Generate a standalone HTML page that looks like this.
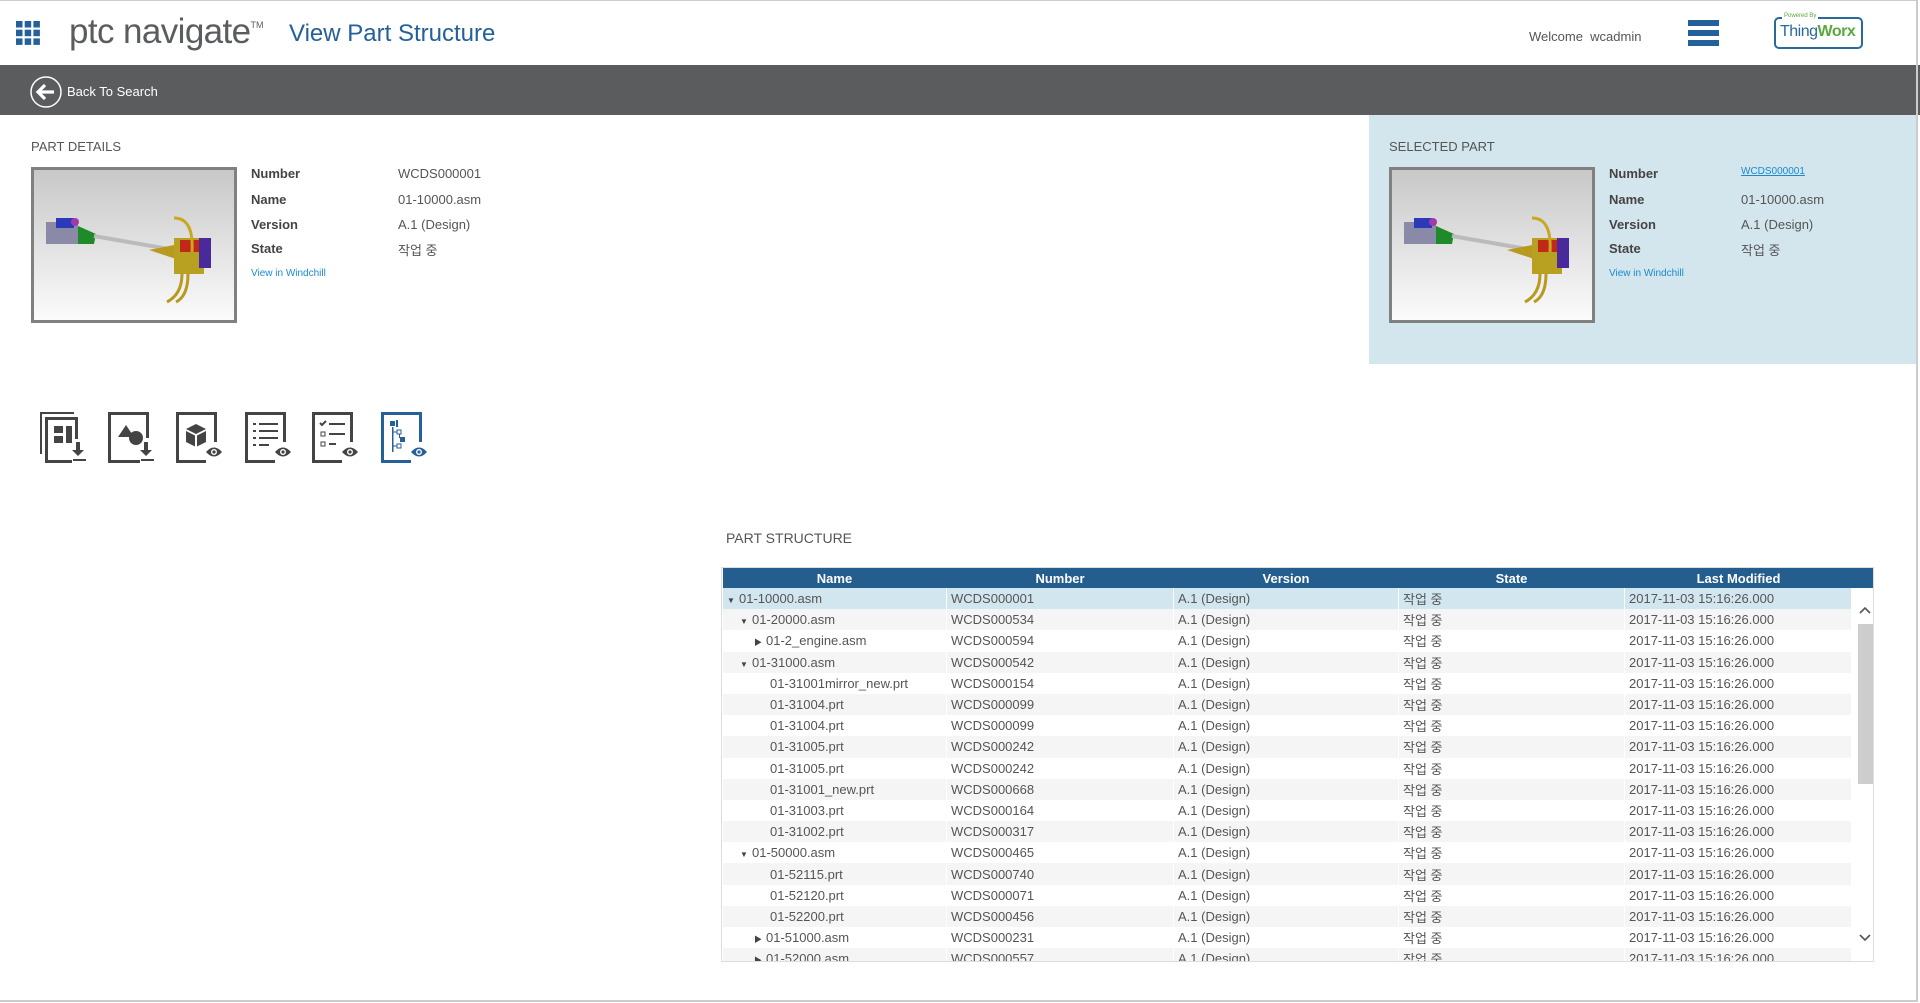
<!DOCTYPE html>
<html><head><meta charset="utf-8">
<style>
*{margin:0;padding:0;box-sizing:border-box}
body{width:1920px;height:1003px;position:relative;overflow:hidden;background:#fff;font-family:"Liberation Sans","Noto Sans CJK KR",sans-serif;color:#555}
.a{position:absolute;white-space:nowrap}
.frame{position:absolute;left:0;top:0;width:1918px;height:1002px;border-top:1px solid #ccc;border-right:2px solid #ccc;border-bottom:2px solid #ccc;pointer-events:none}
.lbl{font-weight:bold;font-size:13px;color:#444}
.val{font-size:13px;color:#555}
.sec{font-size:13px;color:#555}
.img{position:absolute;border:3px solid #808080;background:linear-gradient(#c8c8c8,#fbfbfb)}
table{border-collapse:collapse;table-layout:fixed}
td,th{height:21.2px;font-size:13px;padding:0 0 0 4px;border-left:1px solid #fff;white-space:nowrap;overflow:hidden;color:#555}
th{background:#245e8e;color:#fff;font-weight:bold;text-align:center;height:20px;padding:0;border-left:none}
tr.g td{background:#f5f5f5}
tr.s td{background:#d1e6ee}
.tri{display:inline-block;width:12px;font-size:8px;color:#444}
</style></head><body>
<svg class="a" style="left:16px;top:21px" width="24" height="24" viewBox="0 0 24 24" fill="#24609a">
<rect x="0" y="0" width="6.5" height="6.5"/><rect x="8.7" y="0" width="6.5" height="6.5"/><rect x="17.4" y="0" width="6.5" height="6.5"/>
<rect x="0" y="8.7" width="6.5" height="6.5"/><rect x="8.7" y="8.7" width="6.5" height="6.5"/><rect x="17.4" y="8.7" width="6.5" height="6.5"/>
<rect x="0" y="17.4" width="6.5" height="6.5"/><rect x="8.7" y="17.4" width="6.5" height="6.5"/><rect x="17.4" y="17.4" width="6.5" height="6.5"/></svg>
<div class="a" style="left:69px;top:12px;font-size:35px;color:#5a5d60;letter-spacing:-0.6px">ptc navigate<span style="font-size:9px;vertical-align:top;position:relative;top:8px;letter-spacing:0">TM</span></div>
<div class="a" style="left:289px;top:20px;font-size:24px;color:#24609a">View Part Structure</div>
<div class="a" style="left:1529px;top:29px;font-size:13px;color:#555">Welcome&nbsp; wcadmin</div>
<div class="a" style="left:1688px;top:20px;width:31px;height:6px;background:#24609a"></div>
<div class="a" style="left:1688px;top:30px;width:31px;height:6px;background:#24609a"></div>
<div class="a" style="left:1688px;top:40px;width:31px;height:6px;background:#24609a"></div>
<div class="a" style="left:1774px;top:17px;width:89px;height:32px;border:2px solid #2a6a9a;border-radius:5px"></div>
<div class="a" style="left:1782px;top:13px;font-size:6px;color:#5aa83e;background:#fff;padding:0 2px">Powered By</div>
<div class="a" style="left:1780px;top:23px;font-size:16px;color:#2a6a9a;letter-spacing:-0.5px">Thing<span style="color:#5aa83e;font-weight:bold">Worx</span></div>
<div class="a" style="left:0;top:65px;width:1920px;height:50px;background:#5b5c5e"></div>
<svg class="a" style="left:30px;top:76px" width="32" height="32" viewBox="0 0 32 32"><circle cx="16" cy="16" r="15" fill="none" stroke="#fff" stroke-width="1.5"/><path d="M8 16h16M15 9l-7 7 7 7" fill="none" stroke="#fff" stroke-width="3.2"/></svg>
<div class="a" style="left:67px;top:84px;font-size:13px;color:#fff">Back To Search</div>
<div class="a sec" style="left:31px;top:139px">PART DETAILS</div>
<div class="img" style="left:31px;top:167px;width:206px;height:156px"><svg width="200" height="150" viewBox="0 0 200 150"><g>
<rect x="12" y="52" width="32" height="22" fill="#8a8aa8"/><rect x="22" y="48" width="18" height="10" fill="#2a3ab8"/><circle cx="41" cy="52" r="4" fill="#a03aa8"/><path d="M44 56l18 8-2 10-16 0z" fill="#1e8a2a"/>
<path d="M60 66l92 16" stroke="#bbb" stroke-width="4"/><path d="M115 80l30-6 0 16z" fill="#b89a20"/>
<rect x="140" y="68" width="30" height="36" fill="#b8a020"/><rect x="146" y="70" width="22" height="12" fill="#c02818"/><rect x="165" y="68" width="12" height="30" fill="#4a2a9a"/>
<path d="M140 48q20 0 18 34" stroke="#c8a820" stroke-width="3" fill="none"/><path d="M148 104q0 20-15 28M154 104q0 22-12 28" stroke="#b89a20" stroke-width="3" fill="none"/></g></svg></div>
<div class="a lbl" style="left:251px;top:166px">Number</div><div class="a val" style="left:398px;top:166px">WCDS000001</div>
<div class="a lbl" style="left:251px;top:192px">Name</div><div class="a val" style="left:398px;top:192px">01-10000.asm</div>
<div class="a lbl" style="left:251px;top:217px">Version</div><div class="a val" style="left:398px;top:217px">A.1 (Design)</div>
<div class="a lbl" style="left:251px;top:241px">State</div><div class="a val" style="left:398px;top:240px">작업 중</div>
<div class="a" style="left:251px;top:268px;font-size:10px;color:#1a8ad0">View in Windchill</div>
<div class="a" style="left:1369px;top:115px;width:548px;height:249px;background:#d3e6ed"></div>
<div class="a sec" style="left:1389px;top:139px">SELECTED PART</div>
<div class="img" style="left:1389px;top:167px;width:206px;height:156px"><svg width="200" height="150" viewBox="0 0 200 150"><g>
<rect x="12" y="52" width="32" height="22" fill="#8a8aa8"/><rect x="22" y="48" width="18" height="10" fill="#2a3ab8"/><circle cx="41" cy="52" r="4" fill="#a03aa8"/><path d="M44 56l18 8-2 10-16 0z" fill="#1e8a2a"/>
<path d="M60 66l92 16" stroke="#bbb" stroke-width="4"/><path d="M115 80l30-6 0 16z" fill="#b89a20"/>
<rect x="140" y="68" width="30" height="36" fill="#b8a020"/><rect x="146" y="70" width="22" height="12" fill="#c02818"/><rect x="165" y="68" width="12" height="30" fill="#4a2a9a"/>
<path d="M140 48q20 0 18 34" stroke="#c8a820" stroke-width="3" fill="none"/><path d="M148 104q0 20-15 28M154 104q0 22-12 28" stroke="#b89a20" stroke-width="3" fill="none"/></g></svg></div>
<div class="a lbl" style="left:1609px;top:166px">Number</div><div class="a" style="left:1741px;top:166px;font-size:10px;color:#1a8ad0;text-decoration:underline">WCDS000001</div>
<div class="a lbl" style="left:1609px;top:192px">Name</div><div class="a val" style="left:1741px;top:192px">01-10000.asm</div>
<div class="a lbl" style="left:1609px;top:217px">Version</div><div class="a val" style="left:1741px;top:217px">A.1 (Design)</div>
<div class="a lbl" style="left:1609px;top:241px">State</div><div class="a val" style="left:1741px;top:240px">작업 중</div>
<div class="a" style="left:1609px;top:268px;font-size:10px;color:#1a8ad0">View in Windchill</div>
<svg class="a" style="left:40px;top:412px" width="48" height="52" viewBox="0 0 48 52" fill="#444">
<path d="M0 0h34v2H2v40H0z"/><path d="M5 5h33v22h-3V8H8v40h24v3H5z"/><rect x="14" y="14" width="9" height="7"/><rect x="14" y="24" width="9" height="7"/><rect x="26" y="14" width="6" height="17"/><path d="M36 30h4v8h4l-6 6-6-6h4z"/><rect x="33" y="47" width="13" height="2"/></svg>
<svg class="a" style="left:108px;top:412px" width="48" height="52" viewBox="0 0 48 52" fill="#444">
<path d="M0 0h41v26h-3V3H3v45h29v3H0z"/><path d="M10 25l8-12 8 12z"/><circle cx="28" cy="26" r="7"/><path d="M36 30h4v8h4l-6 6-6-6h4z"/><rect x="33" y="47" width="13" height="2"/></svg>
<svg class="a" style="left:176px;top:412px" width="52" height="52" viewBox="0 0 52 52" fill="#444">
<path d="M0 0h41v30h-3V3H3v45h27v3H0z"/><path d="M20 12l10 5-10 5-10-5z"/><path d="M10 19l9 4.5v11l-9-4.5z"/><path d="M21 23.5l9-4.5v11l-9 4.5z"/><path d="M30 40q8-9 16 0-8 9-16 0z"/><circle cx="38" cy="40" r="3" fill="#fff"/><circle cx="38" cy="40" r="1.6"/></svg>
<svg class="a" style="left:245px;top:412px" width="52" height="52" viewBox="0 0 52 52" fill="#444">
<path d="M0 0h41v30h-3V3H3v45h27v3H0z"/><rect x="8" y="11" width="3" height="2"/><rect x="14" y="11" width="19" height="2"/><rect x="8" y="18" width="3" height="2"/><rect x="14" y="18" width="19" height="2"/><rect x="8" y="25" width="3" height="2"/><rect x="14" y="25" width="19" height="2"/><rect x="8" y="32" width="3" height="2"/><rect x="14" y="32" width="10" height="2"/><path d="M30 40q8-9 16 0-8 9-16 0z"/><circle cx="38" cy="40" r="3" fill="#fff"/><circle cx="38" cy="40" r="1.6"/></svg>
<svg class="a" style="left:312px;top:412px" width="52" height="52" viewBox="0 0 52 52" fill="#444">
<path d="M0 0h41v30h-3V3H3v45h27v3H0z"/><path d="M8 11l2 2 4-4" stroke="#444" stroke-width="2" fill="none"/><rect x="17" y="11" width="16" height="2"/><rect x="9" y="20" width="4" height="4" fill="none" stroke="#444"/><rect x="17" y="21" width="16" height="2"/><rect x="9" y="30" width="4" height="4" fill="none" stroke="#444"/><rect x="17" y="31" width="7" height="2"/><path d="M30 40q8-9 16 0-8 9-16 0z"/><circle cx="38" cy="40" r="3" fill="#fff"/><circle cx="38" cy="40" r="1.6"/></svg>
<svg class="a" style="left:381px;top:412px" width="52" height="52" viewBox="0 0 52 52" fill="#24609a">
<path d="M0 0h41v30h-3V3H3v45h27v3H0z"/><rect x="9" y="9" width="5" height="5"/><rect x="15" y="8" width="2" height="7"/><rect x="11" y="15" width="1.5" height="25"/><path d="M12 20h4" stroke="#24609a"/><rect x="16" y="18" width="4" height="4" fill="none" stroke="#24609a"/><rect x="18" y="22" width="1" height="4"/><rect x="19" y="25" width="5" height="5"/><path d="M12 34h4" stroke="#24609a"/><rect x="16" y="32" width="4" height="4" fill="none" stroke="#24609a"/><path d="M30 40q8-9 16 0-8 9-16 0z"/><circle cx="38" cy="40" r="3" fill="#fff"/><circle cx="38" cy="40" r="1.6"/></svg>
<div class="a" style="left:726px;top:530px;font-size:14px;color:#555">PART STRUCTURE</div>
<div class="a" style="left:721px;top:567px;width:1153px;height:395px;border:1px solid #ddd;overflow:hidden;background:#fff">
<table style="width:1130px">
<colgroup><col style="width:224px"><col style="width:227px"><col style="width:225px"><col style="width:226px"><col style="width:228px"></colgroup>
<tr><th>Name</th><th>Number</th><th>Version</th><th>State</th><th>Last Modified</th></tr>
<tr class="s"><td><span class="tri">▼</span>01-10000.asm</td><td>WCDS000001</td><td>A.1 (Design)</td><td>작업 중</td><td>2017-11-03 15:16:26.000</td></tr>
<tr class="g"><td style="padding-left:17px"><span class="tri">▼</span>01-20000.asm</td><td>WCDS000534</td><td>A.1 (Design)</td><td>작업 중</td><td>2017-11-03 15:16:26.000</td></tr>
<tr><td style="padding-left:31px"><span class="tri">▶</span>01-2_engine.asm</td><td>WCDS000594</td><td>A.1 (Design)</td><td>작업 중</td><td>2017-11-03 15:16:26.000</td></tr>
<tr class="g"><td style="padding-left:17px"><span class="tri">▼</span>01-31000.asm</td><td>WCDS000542</td><td>A.1 (Design)</td><td>작업 중</td><td>2017-11-03 15:16:26.000</td></tr>
<tr><td style="padding-left:47px">01-31001mirror_new.prt</td><td>WCDS000154</td><td>A.1 (Design)</td><td>작업 중</td><td>2017-11-03 15:16:26.000</td></tr>
<tr class="g"><td style="padding-left:47px">01-31004.prt</td><td>WCDS000099</td><td>A.1 (Design)</td><td>작업 중</td><td>2017-11-03 15:16:26.000</td></tr>
<tr><td style="padding-left:47px">01-31004.prt</td><td>WCDS000099</td><td>A.1 (Design)</td><td>작업 중</td><td>2017-11-03 15:16:26.000</td></tr>
<tr class="g"><td style="padding-left:47px">01-31005.prt</td><td>WCDS000242</td><td>A.1 (Design)</td><td>작업 중</td><td>2017-11-03 15:16:26.000</td></tr>
<tr><td style="padding-left:47px">01-31005.prt</td><td>WCDS000242</td><td>A.1 (Design)</td><td>작업 중</td><td>2017-11-03 15:16:26.000</td></tr>
<tr class="g"><td style="padding-left:47px">01-31001_new.prt</td><td>WCDS000668</td><td>A.1 (Design)</td><td>작업 중</td><td>2017-11-03 15:16:26.000</td></tr>
<tr><td style="padding-left:47px">01-31003.prt</td><td>WCDS000164</td><td>A.1 (Design)</td><td>작업 중</td><td>2017-11-03 15:16:26.000</td></tr>
<tr class="g"><td style="padding-left:47px">01-31002.prt</td><td>WCDS000317</td><td>A.1 (Design)</td><td>작업 중</td><td>2017-11-03 15:16:26.000</td></tr>
<tr><td style="padding-left:17px"><span class="tri">▼</span>01-50000.asm</td><td>WCDS000465</td><td>A.1 (Design)</td><td>작업 중</td><td>2017-11-03 15:16:26.000</td></tr>
<tr class="g"><td style="padding-left:47px">01-52115.prt</td><td>WCDS000740</td><td>A.1 (Design)</td><td>작업 중</td><td>2017-11-03 15:16:26.000</td></tr>
<tr><td style="padding-left:47px">01-52120.prt</td><td>WCDS000071</td><td>A.1 (Design)</td><td>작업 중</td><td>2017-11-03 15:16:26.000</td></tr>
<tr class="g"><td style="padding-left:47px">01-52200.prt</td><td>WCDS000456</td><td>A.1 (Design)</td><td>작업 중</td><td>2017-11-03 15:16:26.000</td></tr>
<tr><td style="padding-left:31px"><span class="tri">▶</span>01-51000.asm</td><td>WCDS000231</td><td>A.1 (Design)</td><td>작업 중</td><td>2017-11-03 15:16:26.000</td></tr>
<tr class="g"><td style="padding-left:31px"><span class="tri">▶</span>01-52000.asm</td><td>WCDS000557</td><td>A.1 (Design)</td><td>작업 중</td><td>2017-11-03 15:16:26.000</td></tr>
</table>
<div class="a" style="left:1129px;top:0;width:23px;height:20px;background:#245e8e"></div>
<div class="a" style="left:1129px;top:20px;width:23px;height:375px;background:#fff"></div>
<div class="a" style="left:1136px;top:56px;width:15px;height:160px;background:#cdcdcd"></div>
<svg class="a" style="left:1137px;top:38px" width="12" height="8"><path d="M1 7l5-5 5 5" stroke="#555" stroke-width="1.6" fill="none"/></svg>
<svg class="a" style="left:1137px;top:366px" width="12" height="8"><path d="M1 1l5 5 5-5" stroke="#555" stroke-width="1.6" fill="none"/></svg>
</div>
<div class="frame"></div>
</body></html>
